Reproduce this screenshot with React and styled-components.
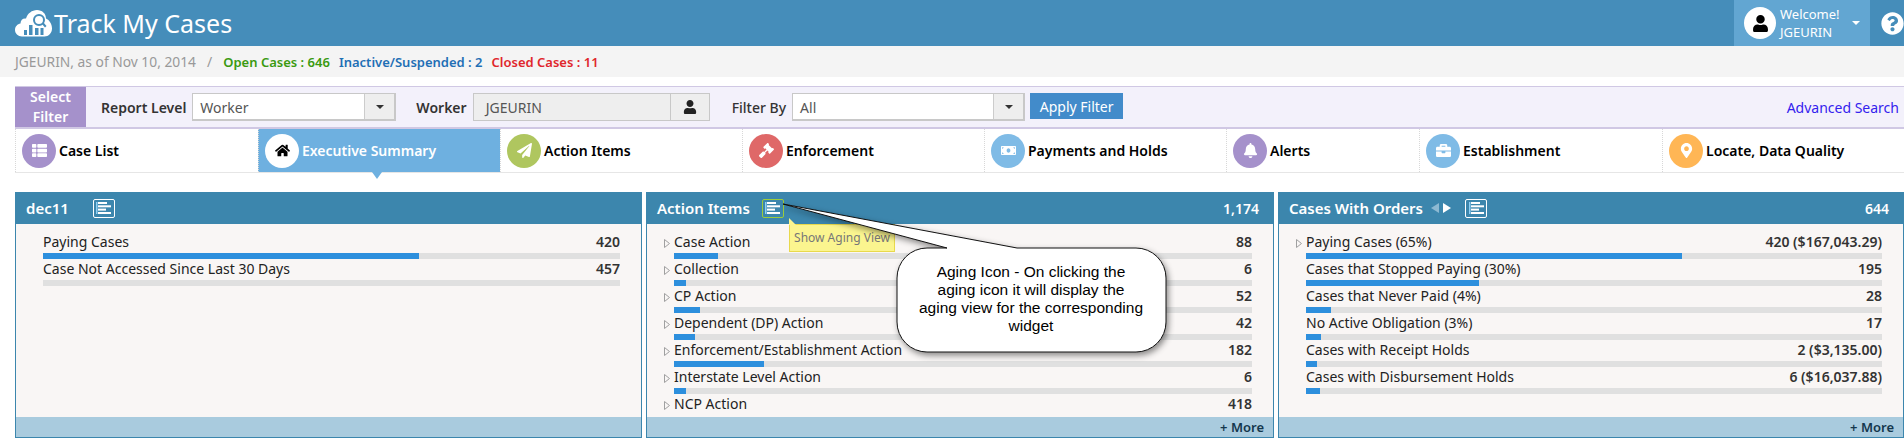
import React from 'react';
import styled, { createGlobalStyle } from 'styled-components';
import {
  FaThList, FaHome, FaPaperPlane, FaGavel, FaMoneyBill, FaBell, FaBriefcase,
  FaMapMarkerAlt, FaUser, FaQuestionCircle,
} from 'react-icons/fa';

const GlobalStyle = createGlobalStyle`
  html, body {
    margin: 0;
    padding: 0;
    background: #fff;
    overflow: hidden;
  }
  * { box-sizing: border-box; }
  body {
    font-family: "Noto Sans", "Open Sans", sans-serif;
    font-size: 14px;
    color: #222;
  }
`;

const tabs = [
  { label: 'Case List', color: '#a591cb', Icon: FaThList },
  { label: 'Executive Summary', color: '#fff', Icon: FaHome, active: true },
  { label: 'Action Items', color: '#afc65f', Icon: FaPaperPlane },
  { label: 'Enforcement', color: '#df6868', Icon: FaGavel },
  { label: 'Payments and Holds', color: '#7fbbe6', Icon: FaMoneyBill },
  { label: 'Alerts', color: '#a591cb', Icon: FaBell },
  { label: 'Establishment', color: '#7fbbe6', Icon: FaBriefcase },
  { label: 'Locate, Data Quality', color: '#ffb655', Icon: FaMapMarkerAlt },
];

const panels = [
  {
    title: 'dec11',
    iconGap: 24,
    rows: [
      { label: 'Paying Cases', value: '420', pct: 65.2 },
      { label: 'Case Not Accessed Since Last 30 Days', value: '457', pct: 0 },
    ],
  },
  {
    title: 'Action Items',
    total: '1,174',
    more: true,
    focused: true,
    expand: true,
    iconGap: 12,
    rows: [
      { label: 'Case Action', value: '88', pct: 7.6 },
      { label: 'Collection', value: '6', pct: 2.1 },
      { label: 'CP Action', value: '52', pct: 4.5 },
      { label: 'Dependent (DP) Action', value: '42', pct: 3.7 },
      { label: 'Enforcement/Establishment Action', value: '182', pct: 15.6 },
      { label: 'Interstate Level Action', value: '6', pct: 2.1 },
      { label: 'NCP Action', value: '418', pct: 36 },
    ],
  },
  {
    title: 'Cases With Orders',
    total: '644',
    more: true,
    arrows: true,
    iconGap: 14,
    rows: [
      { label: 'Paying Cases (65%)', value: '420 ($167,043.29)', pct: 65.2, expand: true },
      { label: 'Cases that Stopped Paying (30%)', value: '195', pct: 30.1 },
      { label: 'Cases that Never Paid (4%)', value: '28', pct: 4.3 },
      { label: 'No Active Obligation (3%)', value: '17', pct: 2.6 },
      { label: 'Cases with Receipt Holds', value: '2 ($3,135.00)', pct: 1.9 },
      { label: 'Cases with Disbursement Holds', value: '6 ($16,037.88)', pct: 2.45 },
    ],
  },
];

const Logo = () => (
  <svg width="37" height="27" viewBox="0 0 37 27">
    <path
      fill="#fff"
      d="M7 26.500C3 26.500 0 23.500 0 20C0 16.500 2.500 14 5.500 13.500C5.500 10 8 8 11 8.500C12.500 3.500 17 0 22 0C27 0 31 3.500 31 8.500C34.500 10 37 14 37 18.500C37 23 33.500 26.500 29.500 26.500Z"
    />
    <g fill="#458dba">
      <rect x="9" y="20" width="3" height="5" />
      <rect x="14" y="15" width="3.500" height="10" />
      <rect x="20" y="18" width="3.500" height="7" />
      <rect x="25.500" y="18" width="3" height="7" />
      <circle cx="24" cy="10" r="5" fill="none" stroke="#458dba" strokeWidth="2" />
      <path d="M27 14l3 3.500 1.500-1.500-3-3.500z" />
    </g>
  </svg>
);

const AgingGlyph = () => (
  <svg width="15" height="12" viewBox="0 0 15 12">
    <rect x="0" y="0" width="1.500" height="12" fill="#8fd0f5" />
    <g fill="#fff">
      <rect x="2" y="0" width="9" height="2" />
      <rect x="2" y="3.300" width="13" height="2" />
      <rect x="2" y="6.600" width="8" height="2" />
      <rect x="2" y="10" width="13" height="2" />
    </g>
  </svg>
);

const TreeArrow = () => (
  <svg width="6" height="9" viewBox="0 0 6 9">
    <path d="M0.500 0.500L5.500 4.500L0.500 8.500Z" fill="none" stroke="#a0a0a0" />
  </svg>
);

const App = () => (
  <Page>
    <GlobalStyle />
    <TopBar>
      <Brand>
        <Logo />
        <BrandName>Track My Cases</BrandName>
      </Brand>
      <TopRight>
        <UserBlock>
          <Avatar><FaUser size={17} color="#000" /></Avatar>
          <UserText>
            <span>Welcome!</span>
            <span>JGEURIN</span>
          </UserText>
          <Caret $color="#fff" />
        </UserBlock>
        <HelpIcon><FaQuestionCircle size={23} color="#fff" /></HelpIcon>
      </TopRight>
    </TopBar>

    <StatusBar>
      <StatusUser>JGEURIN, as of Nov 10, 2014</StatusUser>
      <StatusSlash>/</StatusSlash>
      <StatusItem $color="#3a9a10">Open Cases : 646</StatusItem>
      <StatusItem $color="#1f6fb5">Inactive/Suspended : 2</StatusItem>
      <StatusItem $color="#e0262c">Closed Cases : 11</StatusItem>
    </StatusBar>

    <Content>
      <FilterBar>
        <FilterBadge>Select<br />Filter</FilterBadge>
        <FilterLabel $left={15}>Report Level</FilterLabel>
        <SelectBox $width={204}>
          <SelectValue>Worker</SelectValue>
          <SelectCaret><Caret $color="#333" /></SelectCaret>
        </SelectBox>
        <FilterLabel $left={20}>Worker</FilterLabel>
        <WorkerInput>JGEURIN</WorkerInput>
        <WorkerButton><FaUser size={14} color="#222" /></WorkerButton>
        <FilterLabel $left={22} $light>Filter By</FilterLabel>
        <SelectBox $width={233}>
          <SelectValue>All</SelectValue>
          <SelectCaret><Caret $color="#333" /></SelectCaret>
        </SelectBox>
        <ApplyButton>Apply Filter</ApplyButton>
        <AdvancedLink>Advanced Search</AdvancedLink>
      </FilterBar>

      <TabRow>
        {tabs.map(({ label, color, Icon, active }) => (
          <Tab key={label} $active={active}>
            <TabIcon $color={color}>
              <Icon size={15} color={active ? '#000' : '#fff'} />
            </TabIcon>
            <TabLabel $active={active}>{label}</TabLabel>
          </Tab>
        ))}
      </TabRow>

      <PanelGrid>
        {panels.map((panel) => (
          <Panel key={panel.title}>
            <PanelHeader>
              <PanelTitle>{panel.title}</PanelTitle>
              {panel.arrows && (
                <PagerArrows>
                  <PagerArrow $left />
                  <PagerArrow />
                </PagerArrows>
              )}
              <AgingButton $focused={panel.focused} $gap={panel.iconGap}><AgingGlyph /></AgingButton>
              {panel.total && <PanelTotal>{panel.total}</PanelTotal>}
            </PanelHeader>
            <PanelBody>
              {panel.rows.map((row) => (
                <Row key={row.label}>
                  <RowHead>
                    {(panel.expand || row.expand) && <RowArrow><TreeArrow /></RowArrow>}
                    <RowLabel>{row.label}</RowLabel>
                    <RowValue>{row.value}</RowValue>
                  </RowHead>
                  <Bar><BarFill $pct={row.pct} /></Bar>
                </Row>
              ))}
            </PanelBody>
            <PanelFooter>{panel.more && <MoreLink>+ More</MoreLink>}</PanelFooter>
          </Panel>
        ))}
      </PanelGrid>
    </Content>

    <Tooltip>Show Aging View</Tooltip>
    <Callout>
      <svg width="400" height="170" viewBox="775 195 400 170">
        <defs>
          <filter id="calloutShadow" x="-10%" y="-10%" width="125%" height="125%">
            <feDropShadow dx="2" dy="3" stdDeviation="3" floodColor="#000" floodOpacity="0.45" />
          </filter>
        </defs>
        <path
          filter="url(#calloutShadow)"
          fill="#fff"
          stroke="#111"
          strokeWidth="1"
          d="M927 248L947 248L783 204L1017 248L1136 248A30 30 0 0 1 1166 278L1166 322A30 30 0 0 1 1136 352L927 352A30 30 0 0 1 897 322L897 278A30 30 0 0 1 927 248Z"
        />
      </svg>
      <CalloutText>
        Aging Icon - On clicking the<br />
        aging icon it will display the<br />
        aging view for the corresponding<br />
        widget
      </CalloutText>
    </Callout>
  </Page>
);

const Page = styled.div`
  position: relative;
  width: 1904px;
  height: 442px;
  overflow: hidden;
`;

const TopBar = styled.header`
  display: flex;
  justify-content: space-between;
  height: 46px;
  background: #458dba;
`;

const Brand = styled.div`
  display: flex;
  align-items: center;
  padding-left: 15px;
  gap: 2px;
`;

const BrandName = styled.div`
  color: #fff;
  font-size: 25px;
  line-height: 46px;
`;

const TopRight = styled.div`
  display: flex;
  width: 170px;
`;

const UserBlock = styled.div`
  display: flex;
  align-items: center;
  width: 139px;
  padding-left: 10px;
  background: #62a6d2;
`;

const Avatar = styled.div`
  display: flex;
  align-items: center;
  justify-content: center;
  width: 32px;
  height: 32px;
  border-radius: 50%;
  background: #fff;
`;

const UserText = styled.div`
  display: flex;
  flex-direction: column;
  width: 76px;
  padding-left: 4px;
  color: #fff;
  font-size: 13px;
  line-height: 18px;
`;

const Caret = styled.span`
  display: block;
  width: 0;
  height: 0;
  border-left: 4px solid transparent;
  border-right: 4px solid transparent;
  border-top: 4px solid ${(props) => props.$color};
`;

const HelpIcon = styled.div`
  display: flex;
  align-items: center;
  padding-left: 11px;
`;

const StatusBar = styled.div`
  display: flex;
  align-items: center;
  height: 31px;
  padding-left: 15px;
  background: #f4f4f4;
`;

const StatusUser = styled.span`
  color: #999;
  font-size: 13.800px;
`;

const StatusSlash = styled.span`
  margin: 0 11px;
  color: #999;
`;

const StatusItem = styled.span`
  margin-right: 9px;
  color: ${(props) => props.$color};
  font-size: 13px;
  font-weight: 600;
`;

const Content = styled.main`
  padding: 9px 0 0 15px;
`;

const FilterBar = styled.div`
  display: flex;
  align-items: center;
  height: 43px;
  background: #f3f1fb;
  border-top: 1px solid #d0c8e4;
  border-bottom: 2px solid #d0c8e4;
`;

const FilterBadge = styled.div`
  width: 71px;
  height: 40px;
  background: #a591cb;
  color: #fff;
  font-size: 14px;
  font-weight: 600;
  line-height: 20px;
  text-align: center;
`;

const FilterLabel = styled.label`
  margin: 0 6px 0 ${(props) => props.$left}px;
  color: #333;
  font-weight: ${(props) => (props.$light ? 500 : 600)};
  font-size: 14px;
  white-space: nowrap;
`;

const SelectBox = styled.div`
  display: flex;
  width: ${(props) => props.$width}px;
  height: 28px;
  background: #fff;
  border: 1px solid #c8c8c8;
  border-width: 1px 2px 2px 1px;
`;

const SelectValue = styled.div`
  flex: 1;
  padding-left: 7px;
  color: #555;
  font-size: 14px;
  line-height: 27px;
`;

const SelectCaret = styled.div`
  display: flex;
  align-items: center;
  justify-content: center;
  width: 30px;
  background: #eee;
  border-left: 1px solid #ccc;
`;

const WorkerInput = styled.div`
  width: 198px;
  height: 28px;
  padding-left: 12px;
  background: #eee;
  border: 1px solid #c8c8c8;
  color: #555;
  font-size: 14px;
  line-height: 27px;
`;

const WorkerButton = styled.div`
  display: flex;
  align-items: center;
  justify-content: center;
  width: 39px;
  height: 28px;
  background: #eee;
  border: 1px solid #c8c8c8;
  border-left: 0;
`;

const ApplyButton = styled.button`
  width: 93px;
  height: 26px;
  margin: 0 0 2px 5px;
  padding: 0;
  background: #428bca;
  border: 0;
  color: #fff;
  font-family: inherit;
  font-size: 14px;
`;

const AdvancedLink = styled.a`
  margin-left: auto;
  padding-right: 5px;
  color: #3322ee;
  font-size: 14px;
`;

const TabRow = styled.nav`
  display: grid;
  grid-template-columns: 243px repeat(4, 242px) 193px 243px 242px;
  height: 44px;
  border-bottom: 1px solid #e6e6e6;
`;

const Tab = styled.div`
  position: relative;
  display: flex;
  align-items: center;
  gap: 3px;
  padding-left: 6px;
  background: ${(props) => (props.$active ? '#6eb0e0' : '#fff')};
  border-left: 1px dotted #d8d8d8;

  ${(props) => props.$active && `
    &::after {
      content: '';
      position: absolute;
      left: 113px;
      bottom: -7px;
      border-left: 5px solid transparent;
      border-right: 5px solid transparent;
      border-top: 7px solid #6eb0e0;
    }
  `}
`;

const TabIcon = styled.div`
  display: flex;
  align-items: center;
  justify-content: center;
  width: 34px;
  height: 34px;
  border-radius: 50%;
  background: ${(props) => props.$color};
`;

const TabLabel = styled.span`
  color: ${(props) => (props.$active ? '#fff' : '#000')};
  font-size: 14px;
  font-weight: 600;
`;

const PanelGrid = styled.section`
  display: grid;
  grid-template-columns: 627px 628px 626px;
  gap: 4px;
  margin-top: 19px;
`;

const Panel = styled.article`
  display: flex;
  flex-direction: column;
  height: 246px;
  border: 1px solid #3c86ad;
  border-top: 0;
  background: #f9f6f5;
`;

const PanelHeader = styled.div`
  display: flex;
  align-items: center;
  flex: none;
  height: 32px;
  margin: 0 -1px;
  padding: 0 15px 0 11px;
  background: #3c86ad;
  color: #fff;
`;

const PanelTitle = styled.h3`
  margin: 0;
  font-size: 15px;
  font-weight: 600;
`;

const PagerArrows = styled.div`
  display: flex;
  gap: 4px;
  margin-left: 8px;
`;

const PagerArrow = styled.span`
  width: 0;
  height: 0;
  border-top: 5px solid transparent;
  border-bottom: 5px solid transparent;
  ${(props) => (props.$left ? 'border-right: 8px solid #8db9d2;' : 'border-left: 8px solid #fff;')}
`;

const AgingButton = styled.div`
  display: flex;
  align-items: center;
  justify-content: center;
  width: 22px;
  height: 19px;
  margin-left: ${(props) => props.$gap}px;
  border: 1px solid ${(props) => (props.$focused ? '#9ccc3c' : '#fff')};
  border-radius: 2px;
`;

const PanelTotal = styled.div`
  margin-left: auto;
  font-size: 14px;
  font-weight: 600;
`;

const PanelBody = styled.div`
  flex: 1;
  margin: 8px 21px 3px 14px;
  padding-left: 13px;
  height: 183px;
  overflow: hidden;
`;

const Row = styled.div`
  height: 27px;
`;

const RowHead = styled.div`
  position: relative;
  display: flex;
  justify-content: space-between;
  height: 21px;
  line-height: 20px;
  font-size: 14px;
`;

const RowArrow = styled.span`
  position: absolute;
  left: -10px;
  top: 1px;
`;

const RowLabel = styled.span`
  color: #222;
`;

const RowValue = styled.span`
  color: #333;
  font-weight: 600;
`;

const Bar = styled.div`
  height: 6px;
  background: #e0e0e0;
`;

const BarFill = styled.div`
  width: ${(props) => props.$pct}%;
  height: 100%;
  background: #2d8fdd;
`;

const PanelFooter = styled.div`
  display: flex;
  justify-content: flex-end;
  align-items: center;
  flex: none;
  height: 20px;
  padding-right: 9px;
  background: #a9cbde;
`;

const MoreLink = styled.a`
  color: #14374d;
  font-size: 13px;
  font-weight: 600;
`;

const Tooltip = styled.div`
  position: absolute;
  left: 789px;
  top: 224px;
  width: 106px;
  height: 28px;
  background: #fbf58f;
  border: 1px solid #e8d94c;
  color: #777;
  font-size: 12px;
  line-height: 26px;
  text-align: center;
  white-space: nowrap;

  &::before {
    content: '';
    position: absolute;
    left: -1px;
    top: -7px;
    border-left: 7px solid #fbf58f;
    border-top: 7px solid transparent;
  }
`;

const Callout = styled.div`
  position: absolute;
  left: 775px;
  top: 195px;
  width: 400px;
  height: 170px;
`;

const CalloutText = styled.div`
  position: absolute;
  left: 139px;
  top: 68px;
  width: 234px;
  color: #000;
  font-family: "Liberation Sans", Arial, sans-serif;
  font-size: 15.500px;
  line-height: 18px;
  text-align: center;
  white-space: nowrap;
`;

export default App;
